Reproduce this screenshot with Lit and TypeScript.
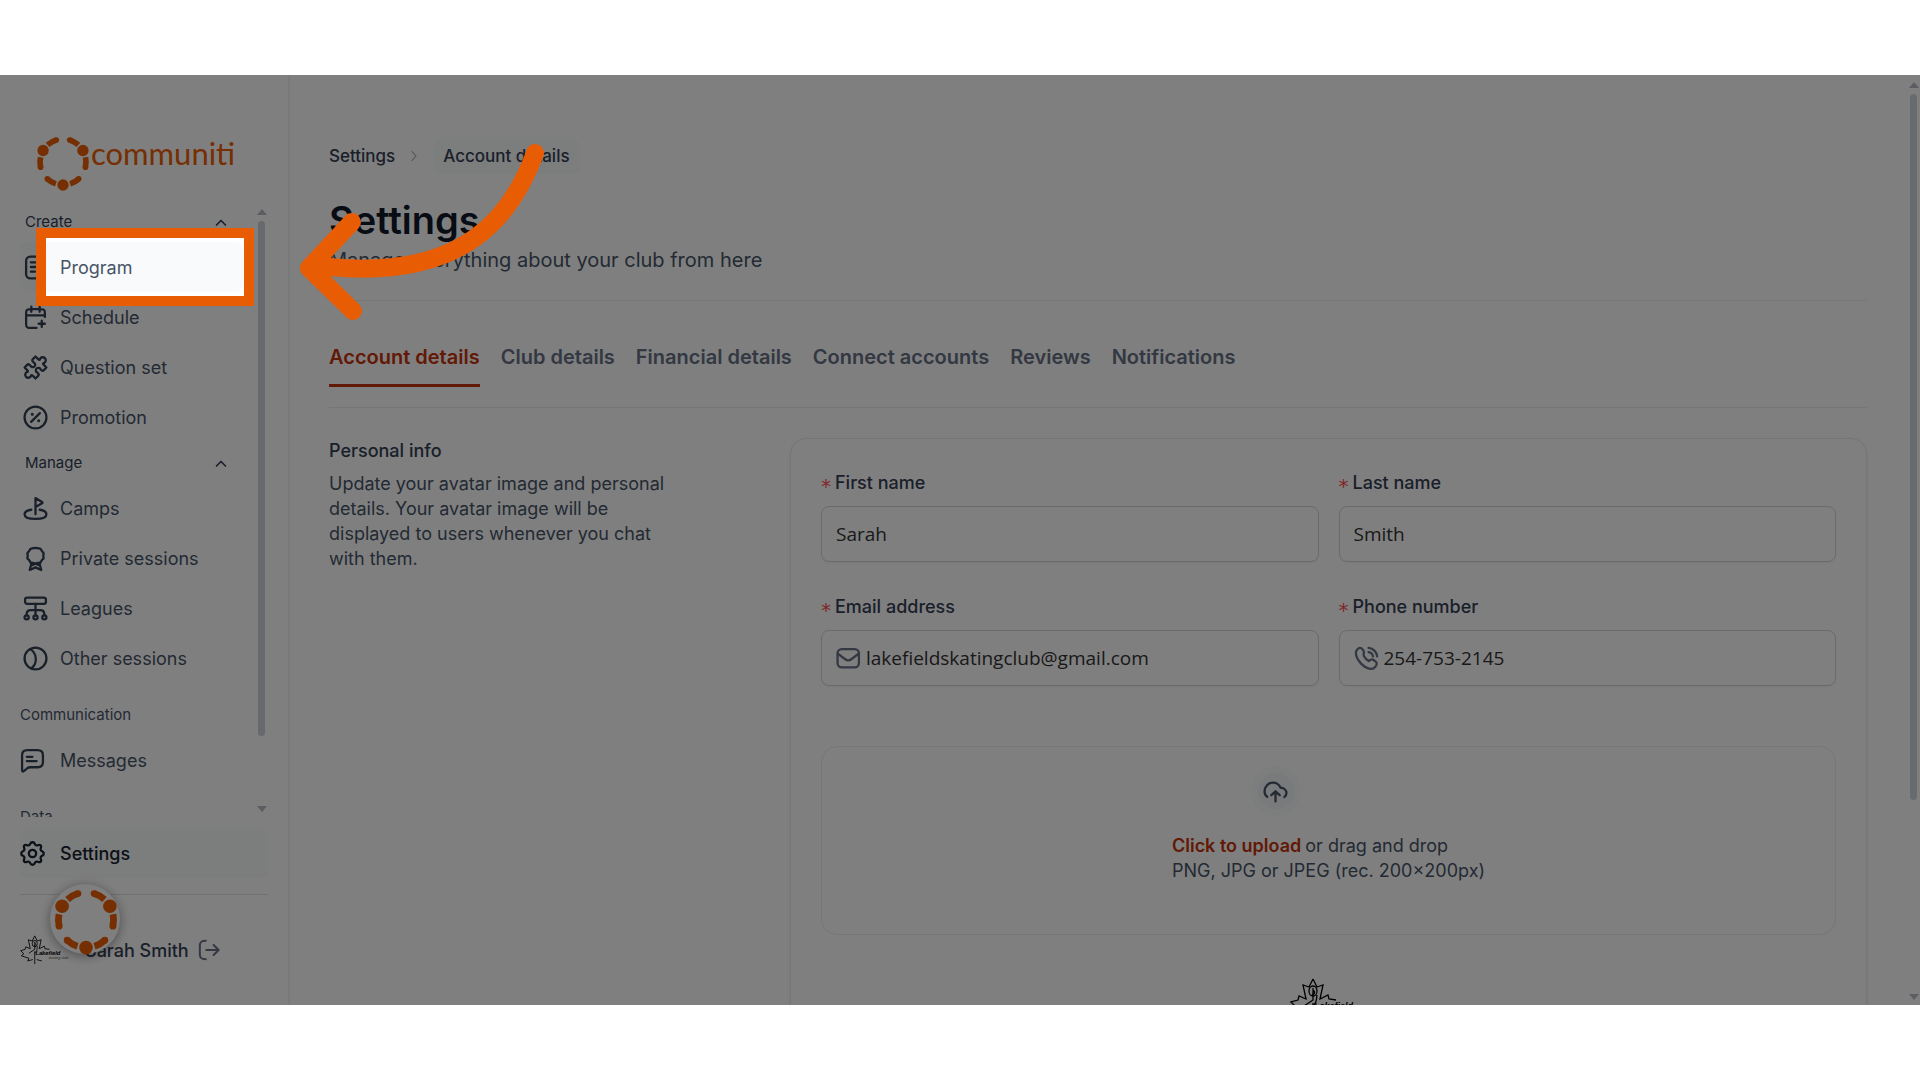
import { LitElement, html, css, svg, nothing, type SVGTemplateResult } from "lit";
import { customElement, property } from "lit/decorators.js";

const icons: Record<string, SVGTemplateResult> = {
  program: svg`<rect x="3" y="1.500" width="18" height="21" rx="4"/><path d="M7.500 7h9M7.500 11.500h9M7.500 16h4"/>`,
  schedule: svg`<path d="M21 11.500V8.800c0-1.700 0-2.500-.3-3.200a3 3 0 0 0-1.300-1.300C18.700 4 17.900 4 16.200 4H7.800c-1.700 0-2.500 0-3.200.3a3 3 0 0 0-1.300 1.300C3 6.300 3 7.100 3 8.800v8.400c0 1.700 0 2.500.3 3.200a3 3 0 0 0 1.300 1.300c.7.3 1.500.3 3.200.3H13M3 10h18M8 1.500v5M16 1.500v5M18 21v-6M15 18h6"/>`,
  question: svg`<path d="M12 1.500 14.500 4C16 5.500 16.500 4.500 16.500 3.500A2.900 2.900 0 1 1 20.500 7.500C19.500 7.500 18.500 8 20 9.500L22.500 12 20 14.500C18.500 16 18 14.500 17 14A2.400 2.400 0 1 0 14 17C14.500 18 16 18.500 14.500 20L12 22.500 9.500 20C8 18.500 7.500 19.500 7.500 20.500A2.900 2.900 0 1 1 3.500 16.500C4.500 16.500 5.500 16 4 14.500L1.500 12 4 9.500C5.500 8 6 9.500 7 10A2.400 2.400 0 1 0 10 7C9.500 6 8 5.500 9.500 4Z"/>`,
  promotion: svg`<circle cx="12" cy="12" r="10.500"/><path d="m7.800 16.200 8.400-8.400"/><circle class="solid" cx="8.900" cy="8.900" r="1"/><circle class="solid" cx="15.100" cy="15.100" r="1"/>`,
  camps: svg`<path d="M12 17.500V2l6.300 3.800c.5.300.5.900 0 1.200L12 10.600M8 13.200c-3.600.6-6.500 2.100-6.500 4.300 0 3 4.700 4.500 10.500 4.500s10.500-1.500 10.500-4.500c0-2.200-2.900-3.700-6.500-4.300"/>`,
  award: svg`<path d="M8.200 16.300 6.500 23 12 20.500 17.500 23l-1.700-6.700M8.500 18.500 12 17l3.500 1.500"/><path d="M12 1.800l2.300.3 2.500.6 1.300 2L19.800 7l-.3 2.500.3 2.400-1.800 1.800-1.300 2.200-2.400.4-2.300.6-2.300-.6-2.400-.4-1.300-2.200L4.200 11.900l.3-2.400L4.200 7l1.700-2.300 1.300-2 2.500-.6z"/>`,
  leagues: svg`<rect x="2" y="1.500" width="20" height="6" rx="2"/><path d="M12 7.500V19M3.500 18.500v-1c0-2.600 1.300-4 4-4h9c2.700 0 4 1.400 4 4v1"/><circle cx="3.500" cy="20.500" r="2"/><circle cx="12" cy="20.500" r="2"/><circle cx="20.500" cy="20.500" r="2"/>`,
  other: svg`<circle cx="12" cy="12" r="10.500"/><path d="M7 3c6.500 4 7 13.500 1.500 18"/>`,
  messages: svg`<path d="M2 7c0-3.500 1.500-5 5-5h10c3.500 0 5 1.500 5 5v6.500c0 3.500-1.500 5-5 5H9.500c-1 0-1.500.2-2.200.7L4 22c-1.300 1-2 .6-2-1zM6.500 8.500h5.500M6.500 12.500h9.500"/>`,
  settings: svg`<circle cx="12" cy="12" r="3.500"/><path d="M9.800 2.800C10.200 1.700 11 1.200 12 1.200s1.800.5 2.200 1.600c.5 1.300 1.800 1.800 3 1.200 1-.5 2-.4 2.600.2s.7 1.600.2 2.600c-.6 1.200-.1 2.500 1.200 3 1.100.4 1.600 1.200 1.600 2.200s-.5 1.800-1.600 2.200c-1.300.5-1.800 1.800-1.200 3 .5 1 .4 2-.2 2.600s-1.600.7-2.600.2c-1.200-.6-2.500-.1-3 1.200-.4 1.100-1.200 1.600-2.200 1.600s-1.800-.5-2.200-1.600c-.5-1.300-1.800-1.800-3-1.200-1 .5-2 .4-2.600-.2s-.7-1.600-.2-2.600c.6-1.200.1-2.500-1.200-3C1.700 13.800 1.200 13 1.200 12s.5-1.800 1.600-2.200c1.300-.5 1.800-1.800 1.200-3-.5-1-.4-2 .2-2.600s1.600-.7 2.600-.2c1.200.6 2.500.1 3-1.200z"/>`,
  logout: svg`<path d="M8.500 2C4 2 2 2.800 2 7v10c0 4.200 2 5 6.500 5M9 12h13M17 6.500l5.500 5.500-5.500 5.500"/>`,
  mail: svg`<rect x="1.500" y="3" width="20.500" height="17.500" rx="4"/><path d="m2 7.500 6.500 5c1.900 1.500 4.600 1.500 6.500 0l6.500-5"/>`,
  phone: svg`<path d="M14 5.800a5 5 0 0 1 4.200 4.200M14 1.800A9 9 0 0 1 22.200 10M9.500 9.500c.9 1.900 2.600 3.600 4.700 4.900 1-.8 2-1.900 3.300-1.600 1 .2 4.100 2.500 4.300 3.500.5 2-2.500 5.700-4.700 5.700C10 22 2 13.500 1.800 6.500 1.800 4.300 4 2 5.800 1.900 7.500 1.800 9.500 4.500 9.600 6c.1 1.300-1 1.900-.1 3.500z"/>`,
  cloud: svg`<path d="M4 17A6 6 0 0 1 1.500 12c0-4.800 3.600-8.500 8-8.500 3.400 0 6 2 7.200 4.700 3.300.2 5.800 2.500 5.800 5.300 0 1.700-.7 3-2 3.800M12 21.500v-9M8 15.500l4-3.700 4 3.700"/>`,
  up: svg`<path d="m6 16 6-6 6 6"/>`,
  right: svg`<path d="m8 3 8 9-8 9"/>`,
};

/** Stroke icon on a 24-unit grid, sized by its host. */
@customElement("ui-icon")
class UiIcon extends LitElement {
  @property() name = "";
  static styles = css`
    :host { display: inline-flex; flex: none; width: 25px; height: 25px; }
    svg { width: 100%; height: 100%; fill: none; stroke: currentColor; stroke-width: 2.200; stroke-linecap: round; stroke-linejoin: round; overflow: visible; }
    .solid { fill: currentColor; stroke-width: 1; }
  `;
  render() {
    return html`<svg viewBox="0 0 24 24" aria-hidden="true">${icons[this.name] ?? nothing}</svg>`;
  }
}

/** Ring of three people: a dot with an arc to each side, repeated every 120 degrees. */
@customElement("ring-mark")
class RingMark extends LitElement {
  static styles = css`
    :host { display: block; flex: none; }
    svg { display: block; width: 100%; height: 100%; fill: #ea5e04; }
    .arc { fill: none; stroke: #ea5e04; stroke-width: 17; }
  `;
  render() {
    const r = 69;
    const at = (deg: number) => {
      const a = (deg * Math.PI) / 180;
      return [Math.cos(a) * r, Math.sin(a) * r];
    };
    return html`<svg viewBox="-90 -90 180 180" aria-hidden="true">
      ${[90, 210, 330].map((deg) => {
        const [cx, cy] = at(deg);
        return svg`<circle cx=${cx} cy=${cy} r="17"/>${[-1, 1].map((side) => {
          const [x1, y1] = at(deg + side * 18);
          const [x2, y2] = at(deg + side * 43);
          return svg`<path class="arc" d="M${x1} ${y1}A${r} ${r} 0 0 ${side > 0 ? 1 : 0} ${x2} ${y2}"/><circle cx=${x2} cy=${y2} r="8.500"/>`;
        })}`;
      })}
    </svg>`;
  }
}

/** Maple-leaf club badge with its name across the lower right. */
@customElement("club-badge")
class ClubBadge extends LitElement {
  static styles = css`
    :host { display: block; flex: none; }
    svg { display: block; width: 100%; height: 100%; fill: none; stroke: #000; stroke-width: 1.300; }
    text { fill: #000; stroke: none; font: italic 700 9px "Liberation Sans", sans-serif; }
    .sub { font-size: 6px; font-weight: 400; fill: #555; }
  `;
  render() {
    return html`<svg viewBox="0 0 78 46" role="img" aria-label="Lakefield">
      <path d="M23 1l4 8 6-2-3 14 8-4 1 4 7 1M23 1l-4 8-6-2 3 14-7-3-1 4-7 2 5 5-4 3 12 4-2 4 8-2M23 25v20M26 38l8 2"/>
      <ellipse cx="23" cy="13" rx="4" ry="5"/><path d="M23 10v12l-9 6M23 12c3 2 1 5-1 4M27 17c-1 5 1 6-4 11"/>
      <text x="24" y="31">Lakefield</text><text class="sub" x="44" y="37">skating club</text>
    </svg>`;
  }
}

const createItems = [["program", "Program"], ["schedule", "Schedule"], ["question", "Question set"], ["promotion", "Promotion"]];
const manageItems = [["camps", "Camps"], ["award", "Private sessions"], ["leagues", "Leagues"], ["other", "Other sessions"]];
const tabs = ["Account details", "Club details", "Financial details", "Connect accounts", "Reviews", "Notifications"];
const fields = [
  { id: "first", label: "First name", value: "Sarah", type: "text", icon: "" },
  { id: "last", label: "Last name", value: "Smith", type: "text", icon: "" },
  { id: "email", label: "Email address", value: "lakefieldskatingclub@gmail.com", type: "email", icon: "mail" },
  { id: "phone", label: "Phone number", value: "254-753-2145", type: "tel", icon: "phone" },
];

@customElement("app-root")
class AppRoot extends LitElement {
  static styles = css`
    :host, * { box-sizing: border-box; }
    :host { display: flex; height: 100vh; padding: 75px 0; background: #fff; font-family: Inter, "Liberation Sans", sans-serif; font-size: 18px; line-height: 25px; color: #475467; }
    h1, h2, p { margin: 0; }
    a { color: inherit; text-decoration: none; }
    button { font: inherit; color: inherit; background: none; border: 0; padding: 0; text-align: left; }
    .stage { position: relative; flex: 1; display: flex; min-width: 0; overflow: hidden; background: #fff; }

    .sidebar { flex: none; width: 290px; display: flex; flex-direction: column; border-right: 2px solid #f2f4f7; padding: 57px 20px 0; }
    .brand { flex: none; display: flex; align-items: flex-start; height: 60px; margin: 0 0 9px 13px; }
    .brand ring-mark { width: 60px; height: 60px; }
    .wordmark { font: 400 31px/42px Lato, sans-serif; color: #ea5e04; margin-left: -2px; }
    .scroller { flex: 1; min-height: 0; display: flex; overflow: hidden; }
    .nav { flex: none; width: 223px; }
    .group { display: flex; align-items: center; justify-content: space-between; width: 100%; height: 41px; padding: 0 13px 0 5px; font-size: 15px; color: #344054; }
    .group ui-icon { width: 18px; height: 18px; }
    .section { padding: 21px 0 9px; font-size: 15px; line-height: 22px; color: #475467; }
    .item { flex: none; display: flex; align-items: center; gap: 12px; height: 50px; padding-left: 3px; border-radius: 8px; }
    .item ui-icon { color: #344054; }
    .item.hover { background: #f9fafb; }
    .item.outer { padding-left: 0; gap: 15px; }
    .item.current { margin: 11px 0 0; background: #f9fafb; color: #182230; font-weight: 500; }
    .item.current ui-icon { color: #182230; }

    .rail { display: flex; flex-direction: column; align-items: center; gap: 6px; }
    .rail::before, .rail::after { content: ""; border: 5px solid transparent; }
    .rail::before { border-top: 0; border-bottom: 6px solid #b9bbc7; }
    .rail::after { border-bottom: 0; border-top: 6px solid #b9bbc7; }
    .track { flex: 1; width: 7px; }
    .thumb { border-radius: 4px; background: #cfd2dc; }
    .nav-rail { flex: none; margin-left: 13px; padding: 8px 0 5px; width: 11px; }
    .nav-rail .thumb { height: 89%; }
    .page-rail { flex: none; width: 13px; padding: 7px 0 5px; }
    .page-rail .thumb { height: 79%; background: #cfd7de; }

    .user { flex: none; display: flex; align-items: center; height: 111px; margin-top: 16px; border-top: 1px solid #dfe2e7; color: #344054; font-weight: 500; }
    .user club-badge { width: 50px; height: 30px; }
    .user .name { margin: 0 9px 0 15px; }
    .user ui-icon { display: flex; width: 22px; height: 22px; color: #667085; }

    .main { flex: 1; min-width: 0; padding: 63px 40px 0; margin-left: -1px; }
    .crumbs { display: flex; align-items: center; height: 36px; font-size: 17px; font-weight: 500; color: #344054; }
    .crumbs ui-icon { width: 12px; height: 12px; margin: 0 13px; color: #98a2b3; }
    .crumbs .here { padding: 5px 10px; border-radius: 8px; background: #f9fafb; }
    h1 { margin-top: 22px; font-size: 38px; line-height: 48px; font-weight: 600; color: #101828; }
    .lede { margin-top: 1px; padding-bottom: 25px; border-bottom: 1px solid #eaecf0; font-size: 20px; line-height: 30px; }
    .tabs { display: flex; gap: 21px; padding: 41px 0 20px; border-bottom: 1px solid #eaecf0; font-size: 20px; line-height: 30px; font-weight: 600; color: #667085; }
    .tab { padding-bottom: 12px; border-bottom: 3px solid transparent; white-space: nowrap; }
    .tab.on { color: #c4320a; border-color: #c4320a; }

    .panel { display: grid; grid-template-columns: 461px 1fr; margin-top: 30px; }
    .about h2 { font-size: 18px; font-weight: 500; color: #344054; line-height: 25px; margin-bottom: 8px; }
    .about p { max-width: 350px; }
    .card { padding: 31px 30px; border: 1px solid #eaecf0; border-radius: 16px; box-shadow: 0 1px 3px rgba(16, 24, 40, 0.1); }
    .fields { display: grid; grid-template-columns: 1fr 1fr; gap: 32px 20px; }
    .field label { display: block; height: 25px; margin-bottom: 11px; font-weight: 500; color: #344054; }
    .field label::before { content: "*"; display: inline-block; width: 9px; margin-right: 5px; vertical-align: -4px; color: #ff4d4f; font: 400 20px/20px "DejaVu Sans", sans-serif; }
    .box { display: flex; align-items: center; gap: 5px; height: 56px; padding: 0 14px; border: 1px solid #d0d5dd; border-radius: 8px; box-shadow: 0 1px 2px rgba(16, 24, 40, 0.05); color: #667085; }
    .box input { flex: 1; min-width: 0; border: 0; padding: 0; outline: 0; background: none; font: 400 19px/30px "Open Sans", sans-serif; color: #333; }
    .drop { display: flex; flex-direction: column; align-items: center; height: 189px; margin-top: 60px; padding-top: 19px; border: 1px solid #eaecf0; border-radius: 16px; }
    .halo { display: grid; place-items: center; width: 50px; height: 50px; margin: 0 0 17px 79px; border: 7px solid #f9fafb; border-radius: 50%; background: #f2f4f7; color: #475467; }
    .prompt { display: flex; gap: 4px; }
    .click { color: #c4320a; font-weight: 600; }
    .card club-badge { width: 78px; height: 46px; margin: 43px auto 0; }

    .launcher { position: absolute; left: 50px; bottom: 51px; display: grid; place-items: center; width: 70px; height: 70px; border-radius: 50%; background: #fff; box-shadow: 0 2px 12px rgba(0, 0, 0, 0.4); }
    .launcher ring-mark { width: 72px; height: 72px; }
    .spotlight { position: absolute; left: 36px; top: 153px; width: 218px; height: 78px; border: 10px solid #e85d04; outline: 9999px solid rgba(0, 0, 0, 0.5); pointer-events: none; }
    .arrow { position: absolute; left: 290px; top: 60px; width: 260px; height: 190px; fill: none; stroke: #e85d04; stroke-width: 18; stroke-linecap: round; stroke-linejoin: round; pointer-events: none; }
  `;

  private items(list: string[][]) {
    return list.map(([icon, label]) => html`<a class="item ${icon === "program" ? "hover" : ""}" href="#${icon}"><ui-icon name=${icon}></ui-icon>${label}</a>`);
  }

  render() {
    return html`<div class="stage">
      <aside class="sidebar">
        <div class="brand"><ring-mark></ring-mark><span class="wordmark">communiti</span></div>
        <div class="scroller">
          <nav class="nav">
            <button class="group">Create<ui-icon name="up"></ui-icon></button>
            ${this.items(createItems)}
            <button class="group">Manage<ui-icon name="up"></ui-icon></button>
            ${this.items(manageItems)}
            <div class="section">Communication</div>
            <a class="item outer" href="#messages"><ui-icon name="messages"></ui-icon>Messages</a>
            <div class="section">Data</div>
          </nav>
          <div class="rail nav-rail"><div class="track"><div class="thumb"></div></div></div>
        </div>
        <a class="item outer current" href="#settings"><ui-icon name="settings"></ui-icon>Settings</a>
        <div class="user">
          <club-badge></club-badge><span class="name">Sarah Smith</span>
          <button aria-label="Log out"><ui-icon name="logout"></ui-icon></button>
        </div>
      </aside>
      <main class="main">
        <nav class="crumbs"><a href="#settings">Settings</a><ui-icon name="right"></ui-icon><a class="here" href="#account">Account details</a></nav>
        <h1>Settings</h1>
        <p class="lede">Manage everything about your club from here</p>
        <nav class="tabs">${tabs.map((t, i) => html`<a class="tab ${i === 0 ? "on" : ""}" href="#tab-${i}">${t}</a>`)}</nav>
        <section class="panel">
          <div class="about">
            <h2>Personal info</h2>
            <p>Update your avatar image and personal details. Your avatar image will be displayed to users whenever you chat with them.</p>
          </div>
          <form class="card">
            <div class="fields">
              ${fields.map((f) => html`<div class="field">
                <label for=${f.id}>${f.label}</label>
                <div class="box">${f.icon ? html`<ui-icon name=${f.icon}></ui-icon>` : nothing}<input id=${f.id} type=${f.type} .value=${f.value}></div>
              </div>`)}
            </div>
            <div class="drop">
              <div>
                <div class="halo"><ui-icon name="cloud"></ui-icon></div>
                <div class="prompt"><button class="click" type="button">Click to upload</button><span>or drag and drop</span></div>
                <div>PNG, JPG or JPEG (rec. 200×200px)</div>
              </div>
            </div>
            <club-badge></club-badge>
          </form>
        </section>
      </main>
      <div class="rail page-rail"><div class="track"><div class="thumb"></div></div></div>
      <button class="launcher" aria-label="Open communiti"><ring-mark></ring-mark></button>
      <div class="spotlight"></div>
      <svg class="arrow" viewBox="0 0 260 190" aria-hidden="true">
        <path d="M245 18C223 78 177 145 40 132M62 87 19 133l44 43"/>
      </svg>
    </div>`;
  }
}
